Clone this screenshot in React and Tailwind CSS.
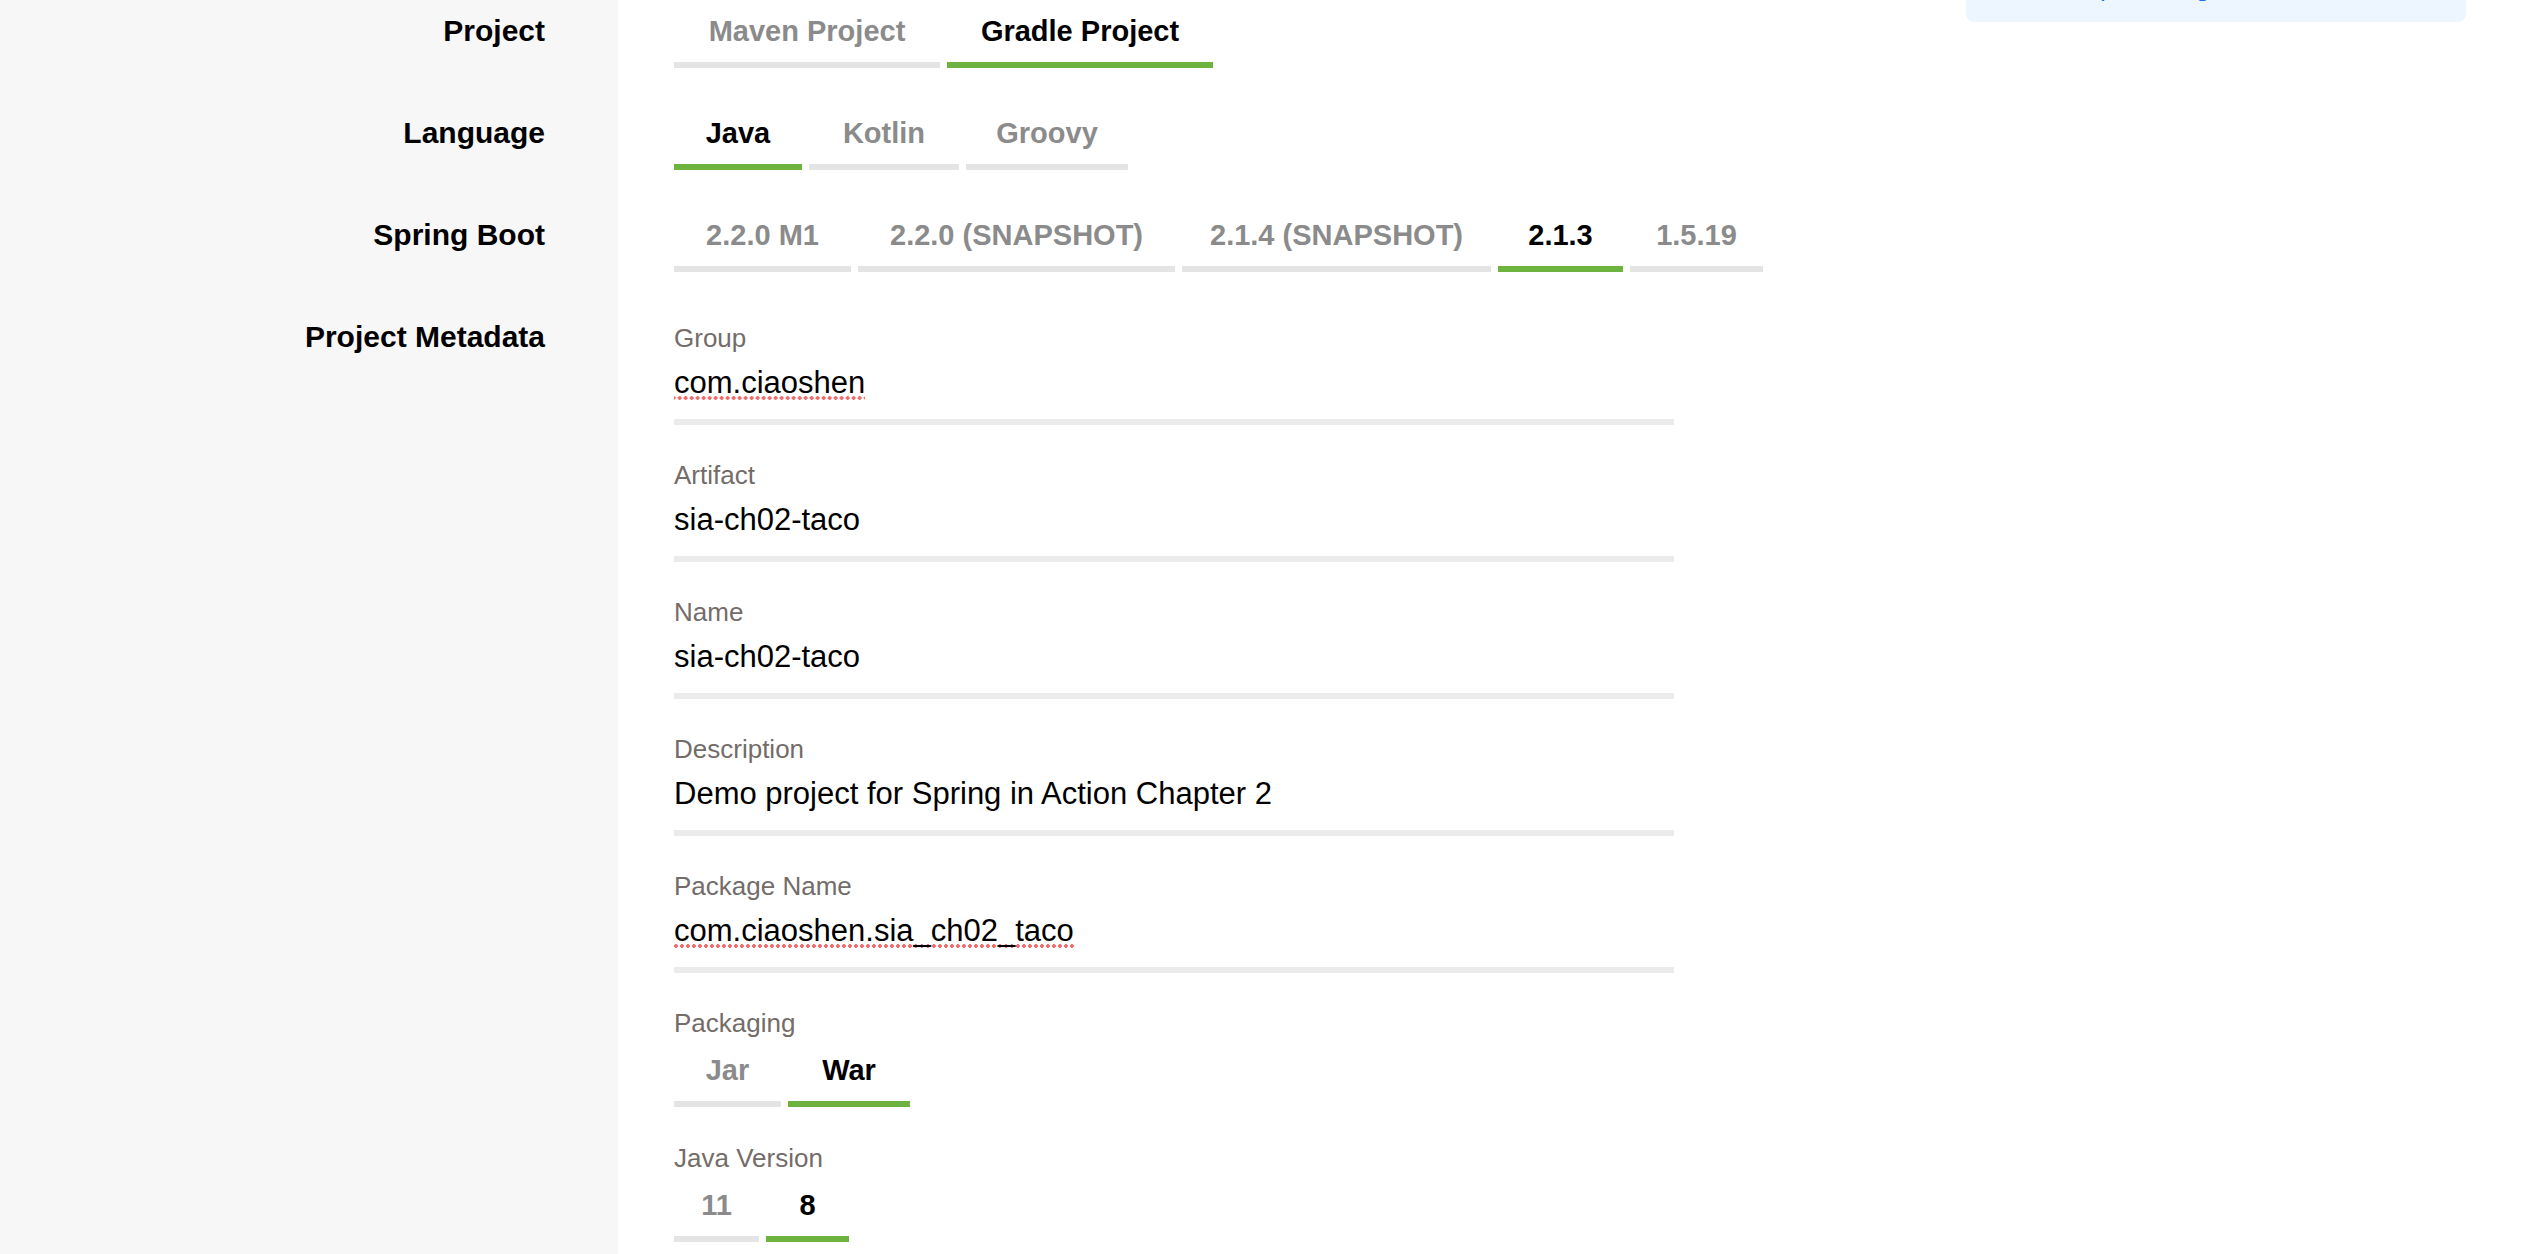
import clsx from 'clsx';

const projects = [
  { label: 'Maven Project', w: 'w-[266px]' },
  { label: 'Gradle Project', w: 'w-[266px]', active: true },
];

const languages = [
  { label: 'Java', w: 'w-[128px]', active: true },
  { label: 'Kotlin', w: 'w-[150px]' },
  { label: 'Groovy', w: 'w-[162px]' },
];

const bootVersions = [
  { label: '2.2.0 M1', w: 'w-[177px]' },
  { label: '2.2.0 (SNAPSHOT)', w: 'w-[317px]' },
  { label: '2.1.4 (SNAPSHOT)', w: 'w-[309px]' },
  { label: '2.1.3', w: 'w-[125px]', active: true },
  { label: '1.5.19', w: 'w-[133px]' },
];

const packagings = [
  { label: 'Jar', w: 'w-[107px]' },
  { label: 'War', w: 'w-[122px]', active: true },
];

const javaVersions = [
  { label: '11', w: 'w-[85px]' },
  { label: '8', w: 'w-[83px]', active: true },
];

const fields = [
  { label: 'Group', value: 'com.ciaoshen', typo: true },
  { label: 'Artifact', value: 'sia-ch02-taco' },
  { label: 'Name', value: 'sia-ch02-taco' },
  { label: 'Description', value: 'Demo project for Spring in Action Chapter 2' },
  { label: 'Package Name', value: 'com.ciaoshen.sia_ch02_taco', typo: true },
];

const Tab = ({ label, w, active, top = true }) => (
  <div
    className={clsx(
      'flex justify-center border-b-[6px] pb-[14px] text-[29px] font-bold leading-[34px]',
      top ? 'pt-[14px]' : 'pt-0',
      w,
      active ? 'border-[#6db33f] text-black' : 'border-[#e4e4e4] text-[#8b8b8b]'
    )}
  >
    {label}
  </div>
);

const Tabs = ({ items, top }) => (
  <div className="flex gap-[7px]">
    {items.map((item) => (
      <Tab key={item.label} {...item} top={top} />
    ))}
  </div>
);

const Row = ({ label, children, className }) => (
  <div className={clsx('flex', className)}>
    <div className="w-[618px] shrink-0 pr-[73px] pt-[14px] text-right text-[30px] font-bold leading-[34px] text-black">
      {label}
    </div>
    <div className="pl-[56px]">{children}</div>
  </div>
);

// spellcheck squiggle: a row of round dots under the word
const Field = ({ label, value, typo }) => (
  <div className="mb-[35px] w-[1000px]">
    <div className="text-[26px] leading-[30px] text-[#736c69]">{label}</div>
    <div className="mt-[12px] border-b-[6px] border-[#ebebeb] pb-[18px] text-[31px] leading-[36px] text-black">
      <span
        className={clsx(
          typo &&
            'bg-[radial-gradient(circle,#f36b6b_1.6px,transparent_2.1px)] bg-[length:6px_4px] bg-bottom bg-repeat-x'
        )}
      >
        {value}
      </span>
    </div>
  </div>
);

export default function App() {
  return (
    <div className="flex min-h-screen overflow-hidden bg-[linear-gradient(to_right,#f7f7f7_618px,#ffffff_618px)] font-['Liberation_Sans',Arial,sans-serif]">
      <div className="w-[1674px] shrink-0">
        <Row label="Project" className="mb-[34px]">
          <Tabs items={projects} />
        </Row>
        <Row label="Language" className="mb-[34px]">
          <Tabs items={languages} />
        </Row>
        <Row label="Spring Boot" className="mb-[34px]">
          <Tabs items={bootVersions} />
        </Row>
        <Row label="Project Metadata">
          <div className="pt-[17px]">
            {fields.map((f) => (
              <Field key={f.label} {...f} />
            ))}
            <div className="mb-[36px]">
              <div className="text-[26px] leading-[30px] text-[#736c69]">Packaging</div>
              <div className="mt-[15px]">
                <Tabs items={packagings} top={false} />
              </div>
            </div>
            <div>
              <div className="text-[26px] leading-[30px] text-[#736c69]">Java Version</div>
              <div className="mt-[15px]">
                <Tabs items={javaVersions} top={false} />
              </div>
            </div>
          </div>
        </Row>
      </div>
      <aside className="ml-[292px] w-[500px] shrink-0">
        <div className="-mt-[40px] h-[62px] rounded-b-lg bg-[#edf5fe] pl-[85px] pt-[12px] text-[26px] leading-[30px] text-[#1a73e8]">
          Template Engines
        </div>
      </aside>
    </div>
  );
}
